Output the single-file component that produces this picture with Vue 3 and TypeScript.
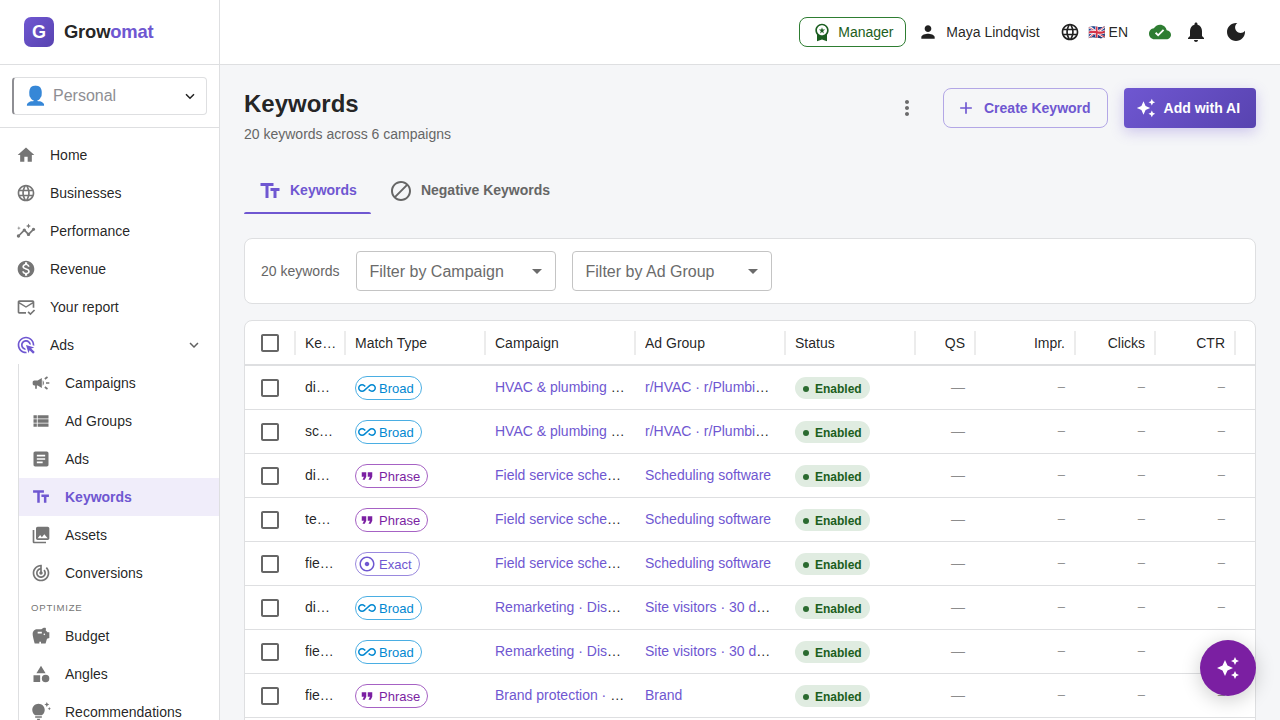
<script setup lang="ts">
interface NavItem {
  label: string
  icon: string
  active?: boolean
}

type MatchType = 'Broad' | 'Phrase' | 'Exact'

interface KeywordRow {
  keyword: string
  match: MatchType
  campaign: string
  adGroup: string
}

const icons: Record<string, string> = {
  home: 'M10 20v-6h4v6h5v-8h3L12 3 2 12h3v8z',
  globe:
    'M11.99 2C6.47 2 2 6.48 2 12s4.47 10 9.99 10C17.52 22 22 17.52 22 12S17.52 2 11.99 2zm6.93 6h-2.95c-.32-1.25-.78-2.45-1.38-3.56 1.84.63 3.37 1.91 4.33 3.56zM12 4.04c.83 1.2 1.48 2.53 1.91 3.96h-3.82c.43-1.43 1.08-2.76 1.91-3.96zM4.26 14C4.1 13.36 4 12.69 4 12s.1-1.36.26-2h3.38c-.08.66-.14 1.32-.14 2 0 .68.06 1.34.14 2H4.26zm.82 2h2.95c.32 1.25.78 2.45 1.38 3.56-1.84-.63-3.37-1.9-4.33-3.56zm2.95-8H5.08c.96-1.66 2.49-2.93 4.33-3.56C8.81 5.55 8.35 6.75 8.03 8zM12 19.96c-.83-1.2-1.48-2.53-1.91-3.96h3.82c-.43 1.43-1.08 2.76-1.91 3.96zM14.34 14H9.66c-.09-.66-.16-1.32-.16-2 0-.68.07-1.35.16-2h4.68c.09.65.16 1.32.16 2 0 .68-.07 1.34-.16 2zm.25 5.56c.6-1.11 1.06-2.31 1.38-3.56h2.95c-.96 1.65-2.49 2.93-4.33 3.56zM16.36 14c.08-.66.14-1.32.14-2 0-.68-.06-1.34-.14-2h3.38c.16.64.26 1.31.26 2s-.1 1.36-.26 2h-3.38z',
  insights:
    'M21 8c-1.45 0-2.26 1.44-1.93 2.51l-3.55 3.56c-.3-.09-.74-.09-1.04 0l-2.55-2.55C12.27 10.45 11.46 9 10 9c-1.45 0-2.27 1.44-1.93 2.52l-4.56 4.55C2.44 15.74 1 16.55 1 18c0 1.1.9 2 2 2 1.45 0 2.26-1.44 1.93-2.51l4.55-4.56c.3.09.74.09 1.04 0l2.55 2.55C12.73 16.55 13.54 18 15 18c1.45 0 2.27-1.44 1.93-2.52l3.56-3.55C21.56 12.26 23 11.45 23 10c0-1.1-.9-2-2-2zM15 9l.94-2.07L18 6l-2.06-.93L15 3l-.92 2.07L12 6l2.08.93zM3.5 11 4 9l2-.5L4 8l-.5-2L3 8l-2 .5L3 9z',
  money:
    'M12 2C6.48 2 2 6.48 2 12s4.48 10 10 10 10-4.48 10-10S17.52 2 12 2zm1.41 16.09V20h-2.67v-1.93c-1.71-.36-3.16-1.46-3.27-3.4h1.96c.1 1.05.82 1.87 2.65 1.87 1.96 0 2.4-.98 2.4-1.59 0-.83-.44-1.61-2.67-2.14-2.48-.6-4.18-1.62-4.18-3.67 0-1.72 1.39-2.84 3.11-3.21V4h2.67v1.95c1.86.45 2.79 1.86 2.85 3.39H14.3c-.05-1.11-.64-1.87-2.22-1.87-1.5 0-2.4.68-2.4 1.64 0 .84.65 1.39 2.67 1.91s4.18 1.39 4.18 3.91c-.01 1.83-1.38 2.83-3.12 3.16z',
  mail: 'M12 18H4V8l8 5 8-5v5h2V6c0-1.1-.9-2-2-2H4c-1.1 0-2 .9-2 2v12c0 1.1.9 2 2 2h8v-2zm8-12-8 5-8-5h16zm-2.66 16-3.54-3.54 1.41-1.41 2.12 2.12 4.24-4.24L23 16.34 17.34 22z',
  adsClick:
    'M11.71 17.99C8.53 17.84 6 15.22 6 12c0-3.31 2.69-6 6-6 3.22 0 5.84 2.53 5.99 5.71l-2.1-.63C15.48 9.31 13.89 8 12 8c-2.21 0-4 1.79-4 4 0 1.89 1.31 3.48 3.08 3.89l.63 2.1zM22 12c0 .3-.01.6-.04.9l-1.97-.59c.01-.1.01-.21.01-.31 0-4.42-3.58-8-8-8s-8 3.58-8 8 3.58 8 8 8c.1 0 .21 0 .31-.01l.59 1.97c-.3.03-.6.04-.9.04-5.52 0-10-4.48-10-10S6.48 2 12 2s10 4.48 10 10zm-3.77 4.26L22 15l-10-3 3 10 1.26-3.77 4.27 4.27 1.98-1.98-4.28-4.26z',
  campaign:
    'M18 11v2h4v-2h-4zm-2 6.61c.96.71 2.21 1.65 3.2 2.39.4-.53.8-1.07 1.2-1.6-.99-.74-2.24-1.68-3.2-2.4-.4.54-.8 1.08-1.2 1.61zM20.4 5.6c-.4-.53-.8-1.07-1.2-1.6-.99.74-2.24 1.68-3.2 2.4.4.53.8 1.07 1.2 1.6.96-.72 2.21-1.65 3.2-2.4zM4 9c-1.1 0-2 .9-2 2v2c0 1.1.9 2 2 2h1v4h2v-4h1l5 3V6L8 9H4zm11.5 3c0-1.33-.58-2.53-1.5-3.35v6.69c.92-.81 1.5-2.01 1.5-3.34z',
  viewList:
    'M3 14h4v-4H3v4zm0 5h4v-4H3v4zM3 9h4V5H3v4zm5 5h13v-4H8v4zm0 5h13v-4H8v4zM8 5v4h13V5H8z',
  article:
    'M19 3H5c-1.1 0-2 .9-2 2v14c0 1.1.9 2 2 2h14c1.1 0 2-.9 2-2V5c0-1.1-.9-2-2-2zm-5 14H7v-2h7v2zm3-4H7v-2h10v2zm0-4H7V7h10v2z',
  textFields: 'M2.5 4v3h5v12h3V7h5V4h-13zm19 5h-9v3h3v7h3v-7h3V9z',
  collections:
    'M22 16V4c0-1.1-.9-2-2-2H8c-1.1 0-2 .9-2 2v12c0 1.1.9 2 2 2h12c1.1 0 2-.9 2-2zm-11-4 2.03 2.71L16 11l4 5H8l3-4zM2 6v14c0 1.1.9 2 2 2h14v-2H4V6H2z',
  track:
    'm19.07 4.93-1.41 1.41C19.1 7.79 20 9.79 20 12c0 4.42-3.58 8-8 8s-8-3.58-8-8c0-4.08 3.05-7.44 7-7.93v2.02C8.16 6.57 6 9.03 6 12c0 3.31 2.69 6 6 6s6-2.69 6-6c0-1.66-.67-3.16-1.76-4.24l-1.41 1.41C15.55 9.9 16 10.9 16 12c0 2.21-1.79 4-4 4s-4-1.79-4-4c0-1.86 1.28-3.41 3-3.86v2.14c-.6.35-1 .98-1 1.72 0 1.1.9 2 2 2s2-.9 2-2c0-.74-.4-1.38-1-1.72V2h-1C6.48 2 2 6.48 2 12s4.48 10 10 10 10-4.48 10-10c0-2.76-1.12-5.26-2.93-7.07z',
  savings:
    'm19.83 7.5-2.27-2.27c.07-.42.18-.81.32-1.15.08-.18.12-.37.12-.58 0-.83-.67-1.5-1.5-1.5-1.64 0-3.09.79-4 2h-5C4.46 4 2 6.46 2 9.5S4.5 21 4.5 21H10v-2h2v2h5.5l1.68-5.59 2.82-.94V7.5h-2.17zM13 9H8V7h5v2zm3 2c-.55 0-1-.45-1-1s.45-1 1-1 1 .45 1 1-.45 1-1 1z',
  category:
    'm12 2-5.5 9h11zM17.5 13a4.5 4.5 0 1 0 0 9 4.5 4.5 0 0 0 0-9zM3 13.5h8v8H3z',
  tips: 'M7 20h4c0 1.1-.9 2-2 2s-2-.9-2-2zm-2-1h8v-2H5v2zm11.5-9.5c0 3.82-2.66 5.86-3.77 6.5H5.27c-1.11-.64-3.77-2.68-3.77-6.5C1.5 5.36 4.86 2 9 2s7.5 3.36 7.5 7.5zm4.87-2.13L20 8l1.37.63L22 10l.63-1.37L24 8l-1.37-.63L22 6l-.63 1.37zM19 6l.94-2.06L22 3l-2.06-.94L19 0l-.94 2.06L16 3l2.06.94L19 6z',
  expand: 'M16.59 8.59 12 13.17 7.41 8.59 6 10l6 6 6-6z',
  premium:
    'M9.68 13.69 12 11.93l2.31 1.76-.88-2.85L15.75 9h-2.84L12 6.19 11.09 9H8.25l2.31 1.84-.88 2.85zM20 10c0-4.42-3.58-8-8-8s-8 3.58-8 8c0 2.03.76 3.87 2 5.28V23l6-2 6 2v-7.72c1.24-1.41 2-3.25 2-5.28zm-8-6c3.31 0 6 2.69 6 6s-2.69 6-6 6-6-2.69-6-6 2.69-6 6-6z',
  person:
    'M12 12c2.21 0 4-1.79 4-4s-1.79-4-4-4-4 1.79-4 4 1.79 4 4 4zm0 2c-2.67 0-8 1.34-8 4v2h16v-2c0-2.66-5.33-4-8-4z',
  cloudDone:
    'M19.35 10.04C18.67 6.59 15.64 4 12 4 9.11 4 6.6 5.64 5.35 8.04 2.34 8.36 0 10.91 0 14c0 3.31 2.69 6 6 6h13c2.76 0 5-2.24 5-5 0-2.64-2.05-4.78-4.65-4.96zM10 17l-3.5-3.5 1.41-1.41L10 14.17 15.18 9l1.41 1.41L10 17z',
  bell: 'M12 22c1.1 0 2-.9 2-2h-4c0 1.1.89 2 2 2zm6-6v-5c0-3.07-1.64-5.64-4.5-6.32V4c0-.83-.67-1.5-1.5-1.5s-1.5.67-1.5 1.5v.68C7.63 5.36 6 7.92 6 11v5l-2 2v1h16v-1l-2-2z',
  moon: 'M12 3c-4.97 0-9 4.03-9 9s4.03 9 9 9 9-4.03 9-9c0-.46-.04-.92-.1-1.36-.98 1.37-2.58 2.26-4.4 2.26-2.98 0-5.4-2.42-5.4-5.4 0-1.81.89-3.42 2.26-4.4-.44-.06-.9-.1-1.36-.1z',
  more: 'M12 8c1.1 0 2-.9 2-2s-.9-2-2-2-2 .9-2 2 .9 2 2 2zm0 2c-1.1 0-2 .9-2 2s.9 2 2 2 2-.9 2-2-.9-2-2-2zm0 6c-1.1 0-2 .9-2 2s.9 2 2 2 2-.9 2-2-.9-2-2-2z',
  add: 'M19 13h-6v6h-2v-6H5v-2h6V5h2v6h6v2z',
  sparkle:
    'm19 9 1.25-2.75L23 5l-2.75-1.25L19 1l-1.25 2.75L15 5l2.75 1.25L19 9zm-7.5.5L9 4 6.5 9.5 1 12l5.5 2.5L9 20l2.5-5.5L17 12l-5.5-2.5zM19 15l-1.25 2.75L15 19l2.75 1.25L19 23l1.25-2.75L23 19l-2.75-1.25L19 15z',
  block:
    'M12 2C6.48 2 2 6.48 2 12s4.48 10 10 10 10-4.48 10-10S17.52 2 12 2zM4 12c0-4.42 3.58-8 8-8 1.85 0 3.55.63 4.9 1.69L5.69 16.9C4.63 15.55 4 13.85 4 12zm8 8c-1.85 0-3.55-.63-4.9-1.69L18.31 7.1C19.37 8.45 20 10.15 20 12c0 4.42-3.58 8-8 8z',
  dropdown: 'm7 10 5 5 5-5z',
  checkbox:
    'M19 5v14H5V5h14m0-2H5c-1.1 0-2 .9-2 2v14c0 1.1.9 2 2 2h14c1.1 0 2-.9 2-2V5c0-1.1-.9-2-2-2z',
  Broad:
    'M18.6 6.62c-1.44 0-2.8.56-3.77 1.53L12 10.66 10.48 12h.01L7.8 14.39c-.64.64-1.49.99-2.4.99-1.87 0-3.39-1.51-3.39-3.38S3.53 8.62 5.4 8.62c.91 0 1.76.35 2.44 1.03l1.13 1 1.51-1.34L9.22 8.2C8.2 7.18 6.84 6.62 5.4 6.62 2.42 6.62 0 9.04 0 12s2.42 5.38 5.4 5.38c1.44 0 2.8-.56 3.77-1.53l2.83-2.5.01.01L13.52 12h-.01l2.69-2.39c.64-.64 1.49-.99 2.4-.99 1.87 0 3.39 1.51 3.39 3.38s-1.52 3.38-3.39 3.38c-.9 0-1.76-.35-2.44-1.03l-1.14-1.01-1.51 1.34 1.27 1.12c1.02 1.01 2.37 1.57 3.82 1.57 2.98 0 5.4-2.41 5.4-5.38s-2.42-5.37-5.4-5.37z',
  Phrase: 'M6 17h3l2-4V7H5v6h3zm8 0h3l2-4V7h-6v6h3z',
  Exact:
    'M12 2C6.49 2 2 6.49 2 12s4.49 10 10 10 10-4.49 10-10S17.51 2 12 2zm0 18c-4.41 0-8-3.59-8-8s3.59-8 8-8 8 3.59 8 8-3.59 8-8 8zm3-8c0 1.66-1.34 3-3 3s-3-1.34-3-3 1.34-3 3-3 3 1.34 3 3z',
}

const mainNav: NavItem[] = [
  { label: 'Home', icon: 'home' },
  { label: 'Businesses', icon: 'globe' },
  { label: 'Performance', icon: 'insights' },
  { label: 'Revenue', icon: 'money' },
  { label: 'Your report', icon: 'mail' },
]

const adsNav: NavItem[] = [
  { label: 'Campaigns', icon: 'campaign' },
  { label: 'Ad Groups', icon: 'viewList' },
  { label: 'Ads', icon: 'article' },
  { label: 'Keywords', icon: 'textFields', active: true },
  { label: 'Assets', icon: 'collections' },
  { label: 'Conversions', icon: 'track' },
]

const optimizeNav: NavItem[] = [
  { label: 'Budget', icon: 'savings' },
  { label: 'Angles', icon: 'category' },
  { label: 'Recommendations', icon: 'tips' },
]

const columns: { label: string; numeric?: boolean }[] = [
  { label: 'Keyword' },
  { label: 'Match Type' },
  { label: 'Campaign' },
  { label: 'Ad Group' },
  { label: 'Status' },
  { label: 'QS', numeric: true },
  { label: 'Impr.', numeric: true },
  { label: 'Clicks', numeric: true },
  { label: 'CTR', numeric: true },
]

const rows: KeywordRow[] = [
  { keyword: 'dispatch software', match: 'Broad', campaign: 'HVAC & plumbing communities', adGroup: 'r/HVAC · r/Plumbing threads' },
  { keyword: 'scheduling app', match: 'Broad', campaign: 'HVAC & plumbing communities', adGroup: 'r/HVAC · r/Plumbing threads' },
  { keyword: 'dispatch scheduling', match: 'Phrase', campaign: 'Field service scheduling', adGroup: 'Scheduling software' },
  { keyword: 'technician scheduling', match: 'Phrase', campaign: 'Field service scheduling', adGroup: 'Scheduling software' },
  { keyword: 'field service software', match: 'Exact', campaign: 'Field service scheduling', adGroup: 'Scheduling software' },
  { keyword: 'dispatch tool', match: 'Broad', campaign: 'Remarketing · Display', adGroup: 'Site visitors · 30 days' },
  { keyword: 'field service app', match: 'Broad', campaign: 'Remarketing · Display', adGroup: 'Site visitors · 30 days' },
  { keyword: 'fieldwork', match: 'Phrase', campaign: 'Brand protection · Search', adGroup: 'Brand' },
]
</script>

<template>
  <div class="app">
    <aside class="sidebar">
      <div class="brand">
        <span class="logo">G</span>
        <span class="brand-name">Grow<span class="accent">omat</span></span>
      </div>
      <div class="account">
        <div class="account-select">
          <span class="account-emoji">👤</span>
          <span class="account-name">Personal</span>
          <svg class="chevron" viewBox="0 0 10 7"><path d="M1 1.2 5 5.2 9 1.2" /></svg>
        </div>
      </div>
      <nav class="nav">
        <a v-for="item in mainNav" :key="item.label" class="nav-item">
          <svg class="icon i20" viewBox="0 0 24 24"><path :d="icons[item.icon]" /></svg>
          <span>{{ item.label }}</span>
        </a>
        <a class="nav-item group">
          <svg class="icon i20" viewBox="0 0 24 24"><path :d="icons.adsClick" /></svg>
          <span>Ads</span>
          <svg class="icon expand" viewBox="0 0 24 24"><path :d="icons.expand" /></svg>
        </a>
        <div class="subnav">
          <a v-for="item in adsNav" :key="item.label" class="nav-item sub" :class="{ active: item.active }">
            <svg class="icon i20" viewBox="0 0 24 24"><path :d="icons[item.icon]" /></svg>
            <span>{{ item.label }}</span>
          </a>
          <div class="section">OPTIMIZE</div>
          <a v-for="item in optimizeNav" :key="item.label" class="nav-item sub">
            <svg class="icon i20" viewBox="0 0 24 24"><path :d="icons[item.icon]" /></svg>
            <span>{{ item.label }}</span>
          </a>
        </div>
      </nav>
    </aside>

    <div class="body">
      <header class="topbar">
        <button class="role">
          <svg class="icon i20" viewBox="0 0 24 24"><path :d="icons.premium" /></svg>
          Manager
        </button>
        <div class="user">
          <svg class="icon i20" viewBox="0 0 24 24"><path :d="icons.person" /></svg>
          <span>Maya Lindqvist</span>
        </div>
        <div class="lang">
          <svg class="icon i20" viewBox="0 0 24 24"><path :d="icons.globe" /></svg>
          <span>🇬🇧 EN</span>
        </div>
        <svg class="icon cloud" viewBox="0 0 24 24"><path :d="icons.cloudDone" /></svg>
        <svg class="icon i24 bell" viewBox="0 0 24 24"><path :d="icons.bell" /></svg>
        <svg class="icon i24 moon" viewBox="0 0 24 24"><path :d="icons.moon" /></svg>
      </header>

      <main class="content">
        <div class="page-head">
          <div>
            <h1>Keywords</h1>
            <p>20 keywords across 6 campaigns</p>
          </div>
          <div class="actions">
            <svg class="icon i24 more" viewBox="0 0 24 24"><path :d="icons.more" /></svg>
            <button class="btn outline">
              <svg class="icon i20" viewBox="0 0 24 24"><path :d="icons.add" /></svg>
              Create Keyword
            </button>
            <button class="btn solid">
              <svg class="icon i20" viewBox="0 0 24 24"><path :d="icons.sparkle" /></svg>
              Add with AI
            </button>
          </div>
        </div>

        <div class="tabs">
          <div class="tab selected">
            <svg class="icon i24" viewBox="0 0 24 24"><path :d="icons.textFields" /></svg>
            <span>Keywords</span>
          </div>
          <div class="tab">
            <svg class="icon i24" viewBox="0 0 24 24"><path :d="icons.block" /></svg>
            <span>Negative Keywords</span>
          </div>
        </div>

        <div class="filters">
          <span class="count">20 keywords</span>
          <div class="select">
            <span>Filter by Campaign</span>
            <svg class="icon i24" viewBox="0 0 24 24"><path :d="icons.dropdown" /></svg>
          </div>
          <div class="select">
            <span>Filter by Ad Group</span>
            <svg class="icon i24" viewBox="0 0 24 24"><path :d="icons.dropdown" /></svg>
          </div>
        </div>

        <div class="grid">
          <div class="row head">
            <div class="cell check">
              <svg class="icon i24" viewBox="0 0 24 24"><path :d="icons.checkbox" /></svg>
              <i class="sep"></i>
            </div>
            <div v-for="col in columns" :key="col.label" class="cell" :class="{ num: col.numeric }">
              <span class="title">{{ col.label }}</span>
              <i class="sep"></i>
            </div>
          </div>
          <div v-for="(row, i) in rows" :key="i" class="row">
            <div class="cell check">
              <svg class="icon i24" viewBox="0 0 24 24"><path :d="icons.checkbox" /></svg>
            </div>
            <div class="cell text">{{ row.keyword }}</div>
            <div class="cell">
              <span class="chip" :class="row.match.toLowerCase()">
                <svg class="icon i18" viewBox="0 0 24 24"><path :d="icons[row.match]" /></svg>
                <span>{{ row.match }}</span>
              </span>
            </div>
            <div class="cell text"><a>{{ row.campaign }}</a></div>
            <div class="cell text"><a>{{ row.adGroup }}</a></div>
            <div class="cell"><span class="status"><i></i><span>Enabled</span></span></div>
            <div class="cell num value">—</div>
            <div class="cell num value metric">–</div>
            <div class="cell num value metric">–</div>
            <div class="cell num value metric">–</div>
          </div>
        </div>
      </main>
    </div>

    <button class="fab">
      <svg class="icon i24" viewBox="0 0 24 24"><path :d="icons.sparkle" /></svg>
    </button>
  </div>
</template>

<style>
html,
body {
  margin: 0;
  overflow: hidden;
}
</style>

<style scoped>
* {
  box-sizing: border-box;
}
.app {
  display: flex;
  width: 1280px;
  height: 720px;
  overflow: hidden;
  background: #f5f6f8;
  color: rgba(0, 0, 0, 0.87);
  font: 14px/20px 'Liberation Sans', Arial, sans-serif;
}
button {
  font: inherit;
}
.icon {
  display: block;
  flex: none;
  fill: currentColor;
}
.i18 { width: 18px; height: 18px; }
.i20 { width: 20px; height: 20px; }
.i24 { width: 24px; height: 24px; }

/* Sidebar */
.sidebar {
  flex: none;
  width: 220px;
  height: 720px;
  overflow: hidden;
  background: #fff;
  border-right: 1px solid #dedfe1;
}
.brand {
  display: flex;
  align-items: center;
  gap: 10px;
  height: 65px;
  padding: 0 24px 1px;
  border-bottom: 1px solid #dedfe1;
}
.logo {
  display: flex;
  align-items: center;
  justify-content: center;
  width: 30px;
  height: 30px;
  border-radius: 7px;
  background: linear-gradient(135deg, #6f57d1, #5843b0);
  color: #fff;
  font-size: 18px;
  font-weight: 700;
}
.brand-name {
  font-size: 18.4px;
  font-weight: 700;
  letter-spacing: -0.18px;
}
.accent {
  color: #6f57d1;
}
.account {
  height: 63px;
  padding: 12px 12px 0;
  border-bottom: 1px solid #dedfe1;
}
.account-select {
  display: flex;
  align-items: center;
  height: 38px;
  padding: 0 11px 0 10px;
  border: 1px solid #dedfe1;
  border-left: 2px solid #8e8e93;
  border-radius: 4px;
  color: #8e8e93;
  font-size: 16px;
}
.account-emoji {
  width: 29px;
  color: rgba(0, 0, 0, 0.87);
  font-size: 18.5px;
  white-space: nowrap;
}
.chevron {
  width: 10px;
  height: 7px;
  margin-left: auto;
  fill: none;
  stroke: #212121;
  stroke-width: 1.5;
}
.nav {
  padding-top: 8px;
}
.nav-item {
  display: flex;
  align-items: center;
  gap: 14px;
  height: 38px;
  padding-left: 16px;
}
.nav-item .icon {
  color: #757575;
}
.nav-item.group > .icon.i20 {
  color: #6f57d1;
}
.nav-item .expand {
  width: 18px;
  height: 18px;
  margin: 0 16px 0 auto;
  color: #616161;
}
.subnav {
  margin-left: 18px;
  border-left: 1px solid #dedfe1;
}
.nav-item.sub {
  padding-left: 12px;
}
.nav-item.active {
  background: #f0edfa;
  color: #6f57d1;
  font-weight: 700;
}
.nav-item.active .icon {
  color: #6f57d1;
}
.section {
  height: 25px;
  padding: 6px 0 0 12px;
  color: #757575;
  font-size: 9.6px;
  line-height: 20px;
  letter-spacing: 0.77px;
}

/* Top bar */
.body {
  flex: 1;
  min-width: 0;
}
.topbar {
  display: flex;
  align-items: center;
  justify-content: flex-end;
  height: 65px;
  padding: 0 32px 1px 0;
  border-bottom: 1px solid #dedfe1;
  background: #fff;
}
.role {
  display: flex;
  align-items: center;
  gap: 6px;
  width: 107px;
  height: 30px;
  padding: 0 0 0 12px;
  border: 1px solid #2e7d32;
  border-radius: 8px;
  background: transparent;
  color: #1b5e20;
}
.user {
  display: flex;
  align-items: center;
  gap: 8px;
  margin-left: 12px;
}
.lang {
  display: flex;
  align-items: center;
  gap: 8px;
  margin-left: 20px;
}
.cloud {
  width: 22px;
  height: 22px;
  margin-left: 21px;
  color: #2e7d32;
}
.bell {
  margin-left: 13px;
}
.moon {
  margin-left: 16px;
}

/* Page */
.content {
  padding: 23px 24px 0;
}
.page-head {
  display: flex;
  justify-content: space-between;
  height: 79px;
}
h1 {
  margin: 0;
  font-size: 24px;
  line-height: 32px;
}
p {
  margin: 4px 0 0;
  color: #666;
}
.actions {
  display: flex;
  align-items: center;
  height: 40px;
}
.more {
  margin-right: 24px;
  color: #6b6b6c;
}
.btn {
  display: flex;
  align-items: center;
  gap: 8px;
  height: 40px;
  font-weight: 700;
}
.btn.outline {
  width: 165px;
  padding: 0 0 0 12px;
  border: 1px solid #b3a7e6;
  border-radius: 8px;
  background: transparent;
  color: #6f57d1;
}
.btn.solid {
  gap: 7.6px;
  width: 132px;
  margin-left: 16px;
  padding: 0 0 0 12px;
  border: 0;
  border-radius: 4px;
  background: linear-gradient(135deg, #6f57d1, #5843b0);
  box-shadow: 0 4px 14px rgba(111, 87, 209, 0.3);
  color: #fff;
}
.tabs {
  display: flex;
  gap: 4px;
  height: 47px;
}
.tab {
  position: relative;
  display: flex;
  align-items: center;
  gap: 8px;
  padding: 3px 14px 2px;
  color: #666;
  font-weight: 700;
}
.tab span {
  margin-bottom: 2px;
}
.tab.selected {
  color: #6f57d1;
}
.tab.selected::after {
  content: '';
  position: absolute;
  right: 0;
  bottom: 0;
  left: 0;
  height: 2px;
  border-radius: 2px 2px 0 0;
  background: #6f57d1;
}
.filters {
  display: flex;
  align-items: center;
  gap: 16px;
  height: 66px;
  margin-top: 24px;
  padding: 0 16px;
  border: 1px solid #dedfe1;
  border-radius: 8px;
  background: #fff;
}
.count {
  width: 79px;
  white-space: nowrap;
  color: #666;
}
.select {
  display: flex;
  align-items: center;
  justify-content: space-between;
  width: 200px;
  height: 40px;
  padding: 0 6px 0 12.5px;
  border: 1px solid #c4c4c4;
  border-radius: 4px;
  color: #6b6b6b;
  font-size: 16px;
}
.select span {
  margin-top: 2px;
}

/* Table */
.grid {
  height: 420px;
  margin-top: 16px;
  border: 1px solid #dedfe1;
  border-radius: 8px;
  background: #fff;
  overflow: hidden;
}
.row {
  display: grid;
  grid-template-columns: 50px 50px 140px 150px 150px 130px 60px 100px 80px 80px;
  height: 44px;
  border-bottom: 1px solid #dedfe1;
}
.row.head {
  height: 45px;
  border-bottom-width: 2px;
}
.cell {
  display: flex;
  align-items: center;
  min-width: 0;
  padding: 0 10px;
}
.cell.check {
  padding: 1px 0 0 13px;
  color: #666;
}
.cell.text {
  display: block;
  margin: 0 10px;
  padding: 0;
  overflow: hidden;
  line-height: 42px;
  text-overflow: ellipsis;
  white-space: nowrap;
}
.cell.text a {
  color: #6f57d1;
}
.head .cell {
  padding-right: 0;
}
.title {
  flex: 1;
  min-width: 0;
  overflow: hidden;
  margin-right: 5px;
  text-overflow: ellipsis;
  white-space: nowrap;
}
.sep {
  flex: none;
  width: 2px;
  height: 24px;
  margin-right: -1px;
  margin-left: auto;
  background: #ececec;
}
.head .cell + .cell .title {
  margin-top: 1px;
}
.cell.num {
  justify-content: flex-end;
  text-align: right;
}
.num .title {
  margin-right: 9px;
}
.cell.value {
  padding-bottom: 2px;
  color: #8c8c8c;
}
.metric {
  font-size: 13px;
}
.chip {
  display: inline-flex;
  align-items: center;
  height: 24px;
  margin-top: 1px;
  padding: 0 7px 0 2px;
  border: 1px solid;
  border-radius: 12px;
  font-size: 13px;
}
.chip .icon {
  margin-right: 3px;
}
.chip span {
  margin-top: 1px;
}
.chip.broad {
  border-color: #4aaee3;
  color: #0288d1;
}
.chip.phrase {
  border-color: #a662c4;
  color: #7b1fa2;
}
.chip.exact {
  border-color: #9a89de;
  color: #6f57d1;
}
.status {
  display: inline-flex;
  align-items: center;
  width: 75px;
  height: 22px;
  margin-top: 1px;
  padding-left: 8px;
  border-radius: 11px;
  background: #e0ece1;
  color: #1b5e20;
  font-size: 12px;
  font-weight: 700;
}
.status i {
  width: 6px;
  height: 6px;
  margin: 2px 6px 0 0;
  border-radius: 50%;
  background: #2b6b30;
}
.status span {
  margin-top: 2px;
}

/* Assistant button floats above the table */
.fab {
  position: fixed;
  right: 24px;
  bottom: 24px;
  display: flex;
  align-items: center;
  justify-content: center;
  width: 56px;
  height: 56px;
  border: 0;
  border-radius: 50%;
  background: #7b1fa2;
  box-shadow: 0 4px 20px rgba(0, 0, 0, 0.2);
  color: #fff;
}
</style>
